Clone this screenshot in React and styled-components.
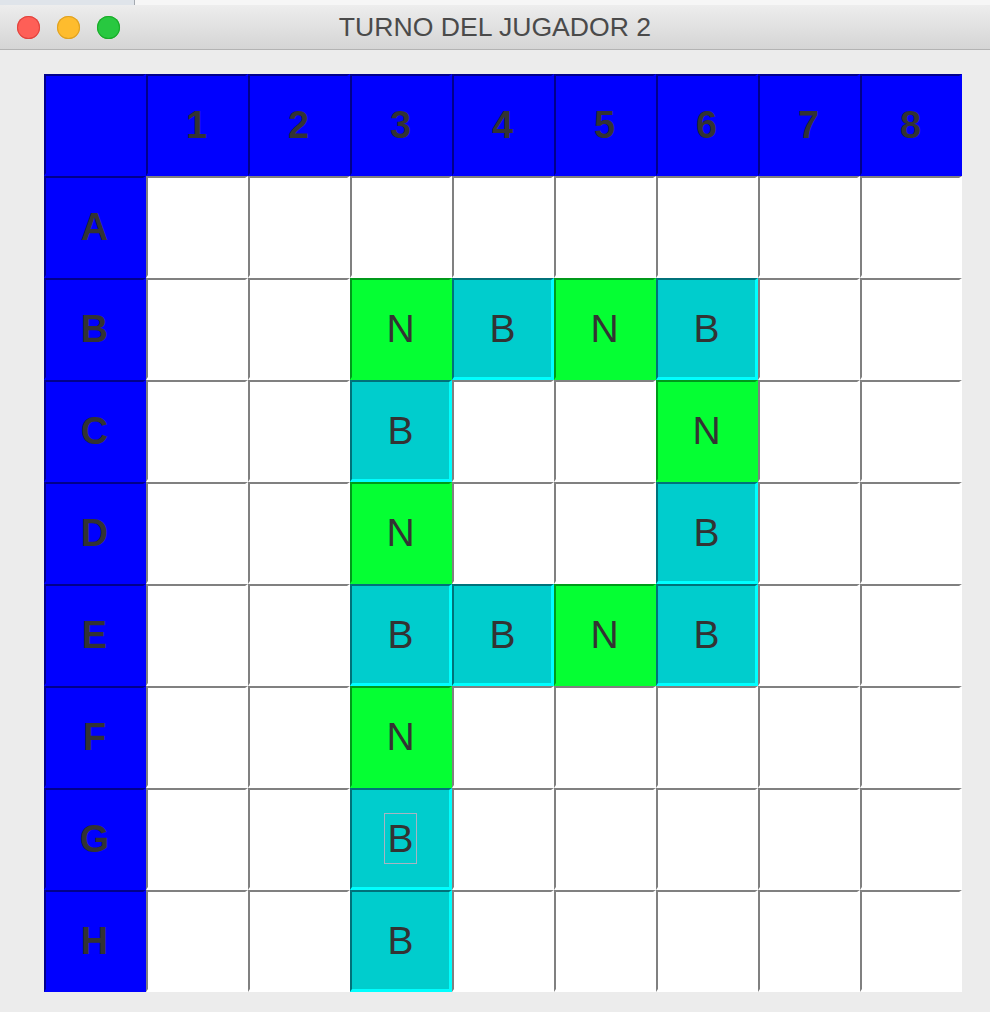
import React from "react";
import styled, { createGlobalStyle } from "styled-components";

const GlobalStyle = createGlobalStyle`
  html, body {
    margin: 0;
    padding: 0;
    background: #ececec;
  }
  body {
    font-family: "Liberation Sans", Arial, sans-serif;
  }
`;

const Backdrop = styled.div`
  display: flex;
  height: 5px;
`;

const BackPane = styled.div`
  width: ${(p) => p.$w || "auto"};
  flex: ${(p) => (p.$w ? "none" : "1")};
  background: ${(p) => p.$bg};
  border-right: ${(p) => (p.$edge ? "1px solid #a4a9b0" : "none")};
`;

const Window = styled.div`
  width: 990px;
  height: 1007px;
  background: #ececec;
  border-radius: 6px 6px 0 0;
  overflow: hidden;
  display: flex;
  flex-direction: column;
`;

const TitleBar = styled.div`
  height: 44px;
  flex: none;
  display: flex;
  align-items: center;
  position: relative;
  background: linear-gradient(#ededed, #d5d5d5);
  border-bottom: 1px solid #b3b3b3;
`;

const Lights = styled.div`
  display: flex;
  gap: 17px;
  padding-left: 17px;
`;

const Light = styled.span`
  width: 23px;
  height: 23px;
  border-radius: 50%;
  background: ${(p) => p.$color};
  box-shadow: inset 0 0 0 1px ${(p) => p.$rim};
`;

const Title = styled.div`
  position: absolute;
  left: 0;
  right: 0;
  text-align: center;
  font-size: 26.6px;
  color: #4a4a4a;
  pointer-events: none;
`;

const Content = styled.div`
  flex: 1;
  padding: 24px 0 0 44px;
`;

const Board = styled.div`
  display: grid;
  grid-template-columns: repeat(9, 102px);
  grid-auto-rows: 102px;
`;

const palette = {
  head: { bg: "#0000ff", dark: "#00008c", light: "#0000ff" },
  empty: { bg: "#ffffff", dark: "#808080", light: "#ffffff" },
  N: { bg: "#05ff33", dark: "#009a1a", light: "#05ff33" },
  B: { bg: "#00cdcd", dark: "#00727a", light: "#00ffff" },
};

const Cell = styled.div`
  box-sizing: border-box;
  display: flex;
  align-items: center;
  justify-content: center;
  background: ${(p) => palette[p.$kind].bg};
  border-style: solid;
  border-width: 2px 3px 3px 2px;
  border-color: ${(p) => palette[p.$kind].dark} ${(p) => palette[p.$kind].light}
    ${(p) => palette[p.$kind].light} ${(p) => palette[p.$kind].dark};
  color: #333333;
  font-size: ${(p) => (p.$kind === "head" ? "38px" : "39px")};
  font-weight: ${(p) => (p.$kind === "head" ? 700 : 400)};
  line-height: 1;
`;

const Focus = styled.span`
  border: 1px solid #a7b4c2;
  padding: 5px 2px;
`;

const cols = ["1", "2", "3", "4", "5", "6", "7", "8"];
const rows = ["A", "B", "C", "D", "E", "F", "G", "H"];

const pieces = {
  B3: "N", B4: "B", B5: "N", B6: "B",
  C3: "B", C6: "N",
  D3: "N", D6: "B",
  E3: "B", E4: "B", E5: "N", E6: "B",
  F3: "N",
  G3: "B",
  H3: "B",
};

const focused = "G3";

export default function App() {
  return (
    <>
      <GlobalStyle />
      <Backdrop>
        <BackPane $w="134px" $bg="#dfe4ea" $edge />
        <BackPane $bg="#f6f6f6" />
      </Backdrop>
      <Window>
        <TitleBar>
          <Lights>
            <Light $color="#fe5f57" $rim="#e0443e" />
            <Light $color="#febc2e" $rim="#dea123" />
            <Light $color="#28c840" $rim="#1aab29" />
          </Lights>
          <Title>TURNO DEL JUGADOR 2</Title>
        </TitleBar>
        <Content>
          <Board>
            <Cell $kind="head" />
            {cols.map((c) => (
              <Cell key={c} $kind="head">{c}</Cell>
            ))}
            {rows.map((r) => (
              <React.Fragment key={r}>
                <Cell $kind="head">{r}</Cell>
                {cols.map((c) => {
                  const id = r + c;
                  const p = pieces[id];
                  return (
                    <Cell key={id} $kind={p || "empty"}>
                      {p && id === focused ? <Focus>{p}</Focus> : p}
                    </Cell>
                  );
                })}
              </React.Fragment>
            ))}
          </Board>
        </Content>
      </Window>
    </>
  );
}
